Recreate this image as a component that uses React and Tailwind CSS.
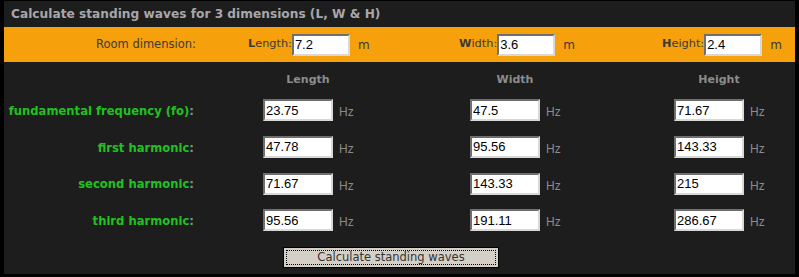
import React from 'react';

const verdana = { fontFamily: '"DejaVu Sans", Verdana, sans-serif' };

const rows = [
  { label: 'fundamental frequency (fo)', values: ['23.75', '47.5', '71.67'] },
  { label: 'first harmonic', values: ['47.78', '95.56', '143.33'] },
  { label: 'second harmonic', values: ['71.67', '143.33', '215'] },
  { label: 'third harmonic', values: ['95.56', '191.11', '286.67'] },
];

const inputCls =
  "h-[22px] border-2 border-t-[#6f6f6f] border-l-[#6f6f6f] border-b-[#d8d8d8] border-r-[#d8d8d8] bg-white px-[1px] text-[13px] text-black font-['Liberation_Sans',Arial,sans-serif] outline-none";

function DimField({ first, rest, value, width }) {
  return (
    <div className={`flex items-center ${width}`}>
      <span className="text-[11.3px] text-[#3a3a3a]" style={verdana}>
        <b>{first}</b>
        {rest}:
      </span>
      <input className={`${inputCls} w-[58px]`} defaultValue={value} />
      <span className="ml-[8px] text-[12px] text-[#3a3a3a]" style={verdana}>m</span>
    </div>
  );
}

export default function App() {
  return (
    <div className="w-[799px] h-[277px] bg-black pl-[4px] pr-[4px] pt-px pb-[3px]">
      <div className="h-full bg-[#1d1d1d] flex flex-col">
        <div className="h-[26px] flex items-center px-[7px] text-[12.2px] font-bold text-[#a7a7ab]" style={verdana}>
          Calculate standing waves for 3 dimensions (L, W &amp; H)
        </div>

        <div className="h-[35px] bg-[#f6a00b] flex items-center pl-[92px]">
          <span className="w-[152px] text-[11.5px] text-[#3a3a3a]" style={verdana}>Room dimension:</span>
          <DimField first="L" rest="ength" value="7.2" width="w-[211px]" />
          <DimField first="W" rest="idth" value="3.6" width="w-[203px]" />
          <DimField first="H" rest="eight" value="2.4" width="" />
        </div>

        <div className="grid grid-cols-[259px_207px_204px_1fr] grid-rows-[30px_repeat(4,36.67px)]">
          <div />
          {['Length', 'Width', 'Height'].map((h) => (
            <div key={h} className="flex items-end pb-[4px]">
              <span className="w-[90px] text-center text-[11px] font-bold text-[#8c8c8c]" style={verdana}>{h}</span>
            </div>
          ))}
          {rows.map((r) => (
            <React.Fragment key={r.label}>
              <div className="flex items-center justify-end pr-[69px] pt-[3px] text-[11.6px] font-bold" style={verdana}>
                <span className="text-[#1fc21f]">{r.label}</span>
                <span className="text-[#8c8c8c]">:</span>
              </div>
              {r.values.map((v, i) => (
                <div key={i} className="flex items-center">
                  <input className={`${inputCls} w-[70px]`} defaultValue={v} />
                  <span className="ml-[6px] mt-[4px] text-[12px] text-[#8c8c8c] font-['Liberation_Sans',Arial,sans-serif]">Hz</span>
                </div>
              ))}
            </React.Fragment>
          ))}
        </div>

        <div className="flex mt-[8px] pl-[279px]">
          <button className="w-[216px] h-[21px] border border-black bg-[#d4d0c8] p-[2px]">
            <div className="h-full border border-dotted border-black flex items-center justify-center text-[11.5px] text-[#333]" style={verdana}>
              Calculate standing waves
            </div>
          </button>
        </div>
      </div>
    </div>
  );
}
